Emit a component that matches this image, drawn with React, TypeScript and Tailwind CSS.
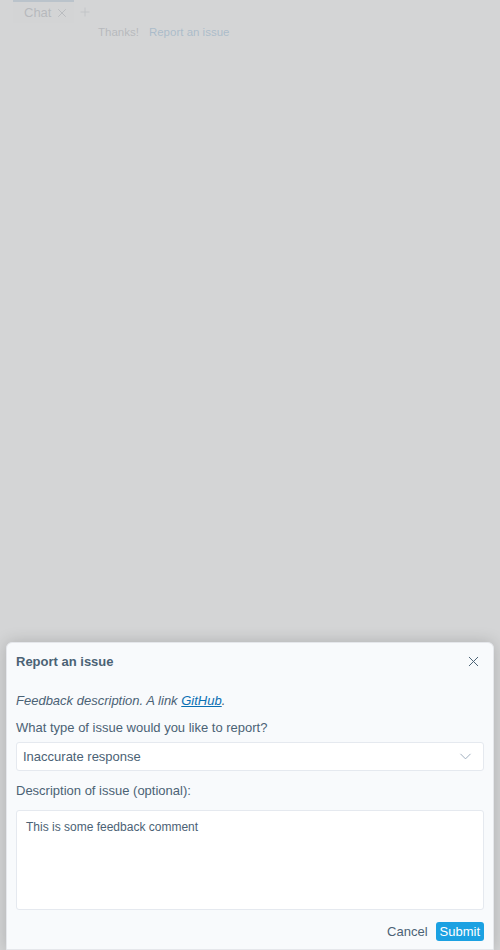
import { X, Plus, ChevronDown } from "lucide-react";

export default function App() {
  return (
    <div
      className="relative h-[950px] w-[500px] overflow-hidden bg-white text-[#475569]"
      style={{ fontFamily: '"Liberation Sans", Arial, sans-serif' }}
    >
      {/* page behind the dialog */}
      <div className="flex items-end pl-[13px]">
        <div className="flex h-[23px] items-center gap-[4px] border-t-2 border-[#7fa3c7] bg-[#fafafa] pl-[11px] pr-[5px] text-[13px] text-[#6b7280]">
          <span>Chat</span>
          <X size={14} strokeWidth={1.5} />
        </div>
        <div className="flex h-[23px] items-center px-[4px] text-[#9ca3af]">
          <Plus size={14} strokeWidth={1.5} />
        </div>
      </div>
      <div className="mt-[1px] flex gap-[10px] pl-[98px] text-[11.5px]">
        <span className="text-[#6b7280]">Thanks!</span>
        <span className="text-[#2f7fc0]">Report an issue</span>
      </div>

      {/* overlay */}
      <div className="absolute inset-0 bg-[#c9cacc]/80" />

      {/* dialog */}
      <div className="absolute bottom-0 left-[6px] right-[6px] top-[642px] flex flex-col rounded-t-[6px] border border-[#e5e7eb] bg-[#f8fafc] px-[9px] text-[13px] text-[#4b6275] shadow-[0_0_16px_rgba(0,0,0,0.18)]">
        <div className="flex h-[37px] items-center justify-between">
          <span className="font-bold">Report an issue</span>
          <X size={17} strokeWidth={1.4} className="mr-[2px] text-[#4b6275]" />
        </div>
        <p className="mt-[12px] leading-[18px] italic">
          Feedback description. A link{" "}
          <a className="text-[#0a6fb3] underline">GitHub</a>.
        </p>
        <p className="mt-[9px] leading-[18px]">What type of issue would you like to report?</p>
        <div className="mt-[5px] flex h-[29px] items-center justify-between rounded-[3px] border border-[#e5e9ef] bg-white pl-[6px] pr-[8px]">
          <span>Inaccurate response</span>
          <ChevronDown size={19} strokeWidth={1.2} className="text-[#9aaabb]" />
        </div>
        <p className="mt-[11px] leading-[18px]">Description of issue (optional):</p>
        <div className="mt-[10px] h-[100px] rounded-[3px] border border-[#e5e9ef] bg-white px-[9px] pt-[7px] text-[12px] leading-[18px]">
          This is some feedback comment
        </div>
        <div className="mt-[12px] flex items-center justify-end gap-[8px]">
          <span className="text-[#4b6275]">Cancel</span>
          <span className="flex h-[19px] items-center rounded-[3px] bg-[#1ba1e2] px-[4px] text-[13px] text-white">
            Submit
          </span>
        </div>
      </div>
    </div>
  );
}
